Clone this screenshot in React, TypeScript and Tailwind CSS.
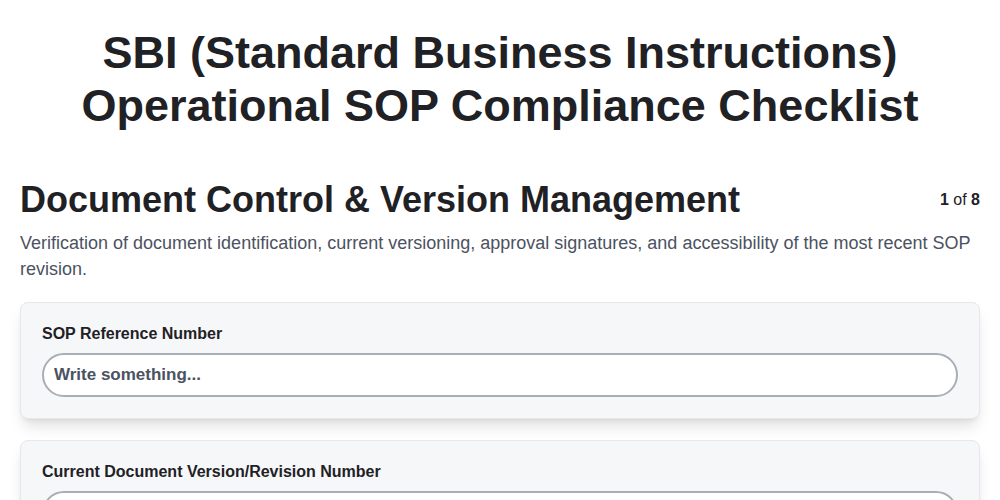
import { useState } from 'react'

type Field = { id: string; label: string }

const FIELDS: Field[] = [
  { id: 'sop-ref', label: 'SOP Reference Number' },
  { id: 'doc-version', label: 'Current Document Version/Revision Number' },
  { id: 'approval', label: 'Approval Signature & Date' },
]

function TextField({ field }: { field: Field }) {
  const [value, setValue] = useState('')
  return (
    <div className="rounded-lg border border-gray-200 bg-[#f6f7f9] px-[21px] pt-[19px] pb-[21px] shadow-[0_10px_15px_-3px_rgba(0,0,0,0.12),0_4px_6px_-4px_rgba(0,0,0,0.1)]">
      <label htmlFor={field.id} className="mb-[7px] block text-base font-bold text-[#1f2125]">
        {field.label}
      </label>
      <input
        id={field.id}
        value={value}
        onChange={(e) => setValue(e.target.value)}
        placeholder="Write something..."
        className="block w-full rounded-full border-2 border-[#a9aeb6] bg-white px-2.5 py-[7px] text-[17px] leading-[26px] font-bold text-gray-800 outline-none placeholder:text-[#4b5261]"
      />
    </div>
  )
}

export default function App() {
  return (
    <div className="min-h-screen bg-white font-['Liberation_Sans',Arial,sans-serif] text-[#1f2125]">
      <div className="px-5 pt-[26px]">
        {/* Checklist title */}
        <h1 className="text-center text-[45px] font-bold leading-[53px]">
          SBI (Standard Business Instructions)
          <br />
          Operational SOP Compliance Checklist
        </h1>

        {/* Section header */}
        <div className="mt-[45px] flex items-center justify-between">
          <h2 className="text-4xl font-bold leading-[46px]">Document Control &amp; Version Management</h2>
          <span className="text-base text-[#1f2125]">
            <b>1</b> of <b>8</b>
          </span>
        </div>
        <p className="mt-[7px] text-lg leading-[26px] text-[#4b5261]">
          Verification of document identification, current versioning, approval signatures, and accessibility of the most recent SOP revision.
        </p>

        {/* Questions */}
        <div className="mt-5 flex flex-col gap-[21px]">
          {FIELDS.map((f) => (
            <TextField key={f.id} field={f} />
          ))}
        </div>
      </div>
    </div>
  )
}
